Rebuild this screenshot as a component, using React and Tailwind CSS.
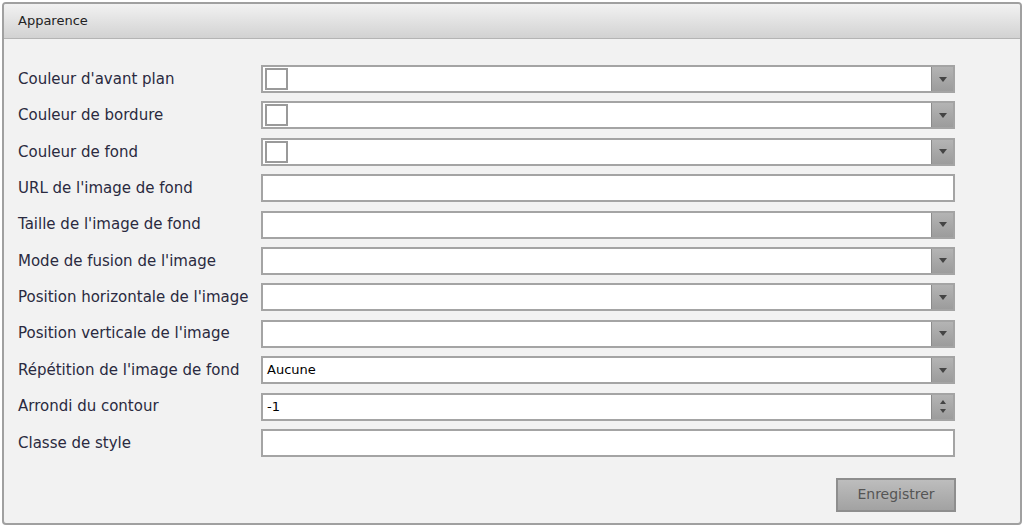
const rows = [
  { label: "Couleur d'avant plan", type: "color" },
  { label: "Couleur de bordure", type: "color" },
  { label: "Couleur de fond", type: "color" },
  { label: "URL de l'image de fond", type: "text" },
  { label: "Taille de l'image de fond", type: "select" },
  { label: "Mode de fusion de l'image", type: "select" },
  { label: "Position horizontale de l'image", type: "select" },
  { label: "Position verticale de l'image", type: "select" },
  { label: "Répétition de l'image de fond", type: "select", value: "Aucune" },
  { label: "Arrondi du contour", type: "number", value: "-1" },
  { label: "Classe de style", type: "text" },
];

function DownButton() {
  return (
    <div className="flex w-[22px] items-center justify-center border-l border-[#8a8a8a] bg-gradient-to-b from-[#b4b4b4] to-[#9c9c9c]">
      <svg width="8" height="5" viewBox="0 0 8 5">
        <path d="M0 0h8L4 5z" fill="#444" />
      </svg>
    </div>
  );
}

function SpinButton() {
  return (
    <div className="flex w-[22px] flex-col items-center justify-center gap-[5px] border-l border-[#8a8a8a] bg-gradient-to-b from-[#b4b4b4] to-[#9c9c9c]">
      <svg width="6" height="4" viewBox="0 0 6 4">
        <path d="M0 4h6L3 0z" fill="#444" />
      </svg>
      <svg width="6" height="4" viewBox="0 0 6 4">
        <path d="M0 0h6L3 4z" fill="#444" />
      </svg>
    </div>
  );
}

function Field({ row }) {
  return (
    <div className="flex h-[28px] w-[694px] border-2 border-[#a4a4a4] bg-white">
      <div className="flex flex-1 items-center px-[4px] text-[13px] text-black">
        {row.type === "color" && (
          <div className="-ml-[2px] h-[22px] w-[23px] border-2 border-[#9a9a9a] bg-white" />
        )}
        {row.value}
      </div>
      {(row.type === "color" || row.type === "select") && <DownButton />}
      {row.type === "number" && <SpinButton />}
    </div>
  );
}

export default function App() {
  return (
    <div className="h-[529px] w-[1024px] bg-white p-[2px] font-['DejaVu_Sans',sans-serif]">
      <div className="flex h-[523px] w-[1020px] flex-col overflow-hidden rounded-[4px] border-2 border-[#a0a0a0] bg-[#f2f2f2]">
        <div className="flex h-[35px] items-center border-b border-[#b4b4b4] bg-gradient-to-b from-[#f2f2f2] to-[#d2d2d2] px-[14px] text-[13px] text-[#222]">
          Apparence
        </div>
        <div className="flex flex-col gap-[8.4px] pl-[14px] pt-[26px]">
          {rows.map((row) => (
            <div key={row.label} className="flex items-center">
              <div className="w-[243px] text-[15px] text-[#2a2a40]">{row.label}</div>
              <Field row={row} />
            </div>
          ))}
        </div>
        <div className="flex justify-end pr-[64px] pt-[21px]">
          <button className="h-[34px] w-[120px] border-2 border-[#8e8e8e] bg-gradient-to-b from-[#bdbdbd] to-[#a2a2a2] text-[14px] text-[#555]">
            Enregistrer
          </button>
        </div>
      </div>
    </div>
  );
}
